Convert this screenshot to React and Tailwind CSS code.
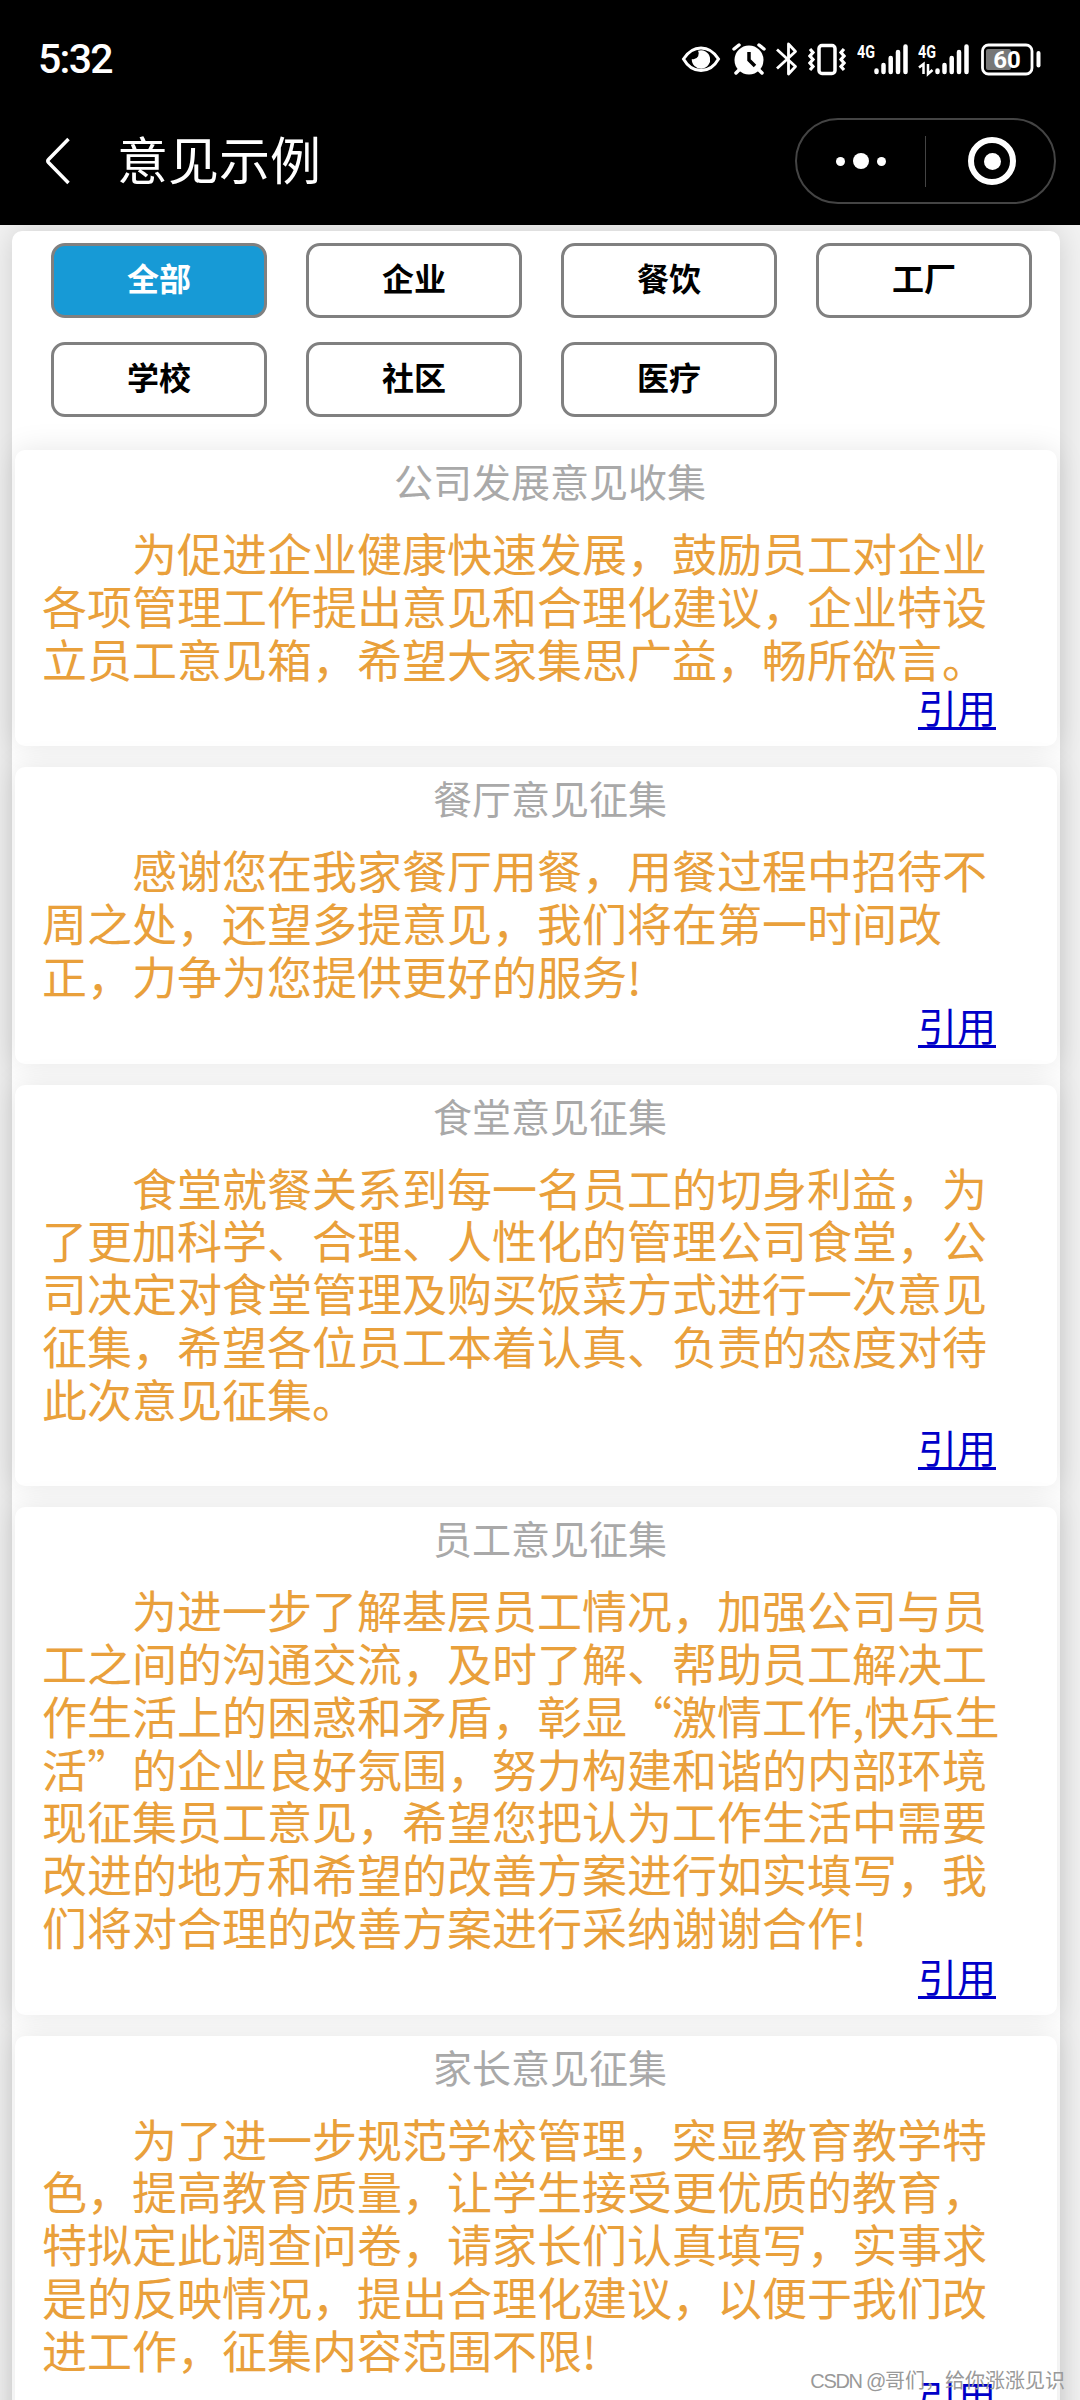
import React from "react";

const categories = ["全部", "企业", "餐饮", "工厂", "学校", "社区", "医疗"];

const examples = [
  {
    title: "公司发展意见收集",
    content:
      "为促进企业健康快速发展，鼓励员工对企业各项管理工作提出意见和合理化建议，企业特设立员工意见箱，希望大家集思广益，畅所欲言。",
  },
  {
    title: "餐厅意见征集",
    content:
      "感谢您在我家餐厅用餐，用餐过程中招待不周之处，还望多提意见，我们将在第一时间改正，力争为您提供更好的服务!",
  },
  {
    title: "食堂意见征集",
    content:
      "食堂就餐关系到每一名员工的切身利益，为了更加科学、合理、人性化的管理公司食堂，公司决定对食堂管理及购买饭菜方式进行一次意见征集，希望各位员工本着认真、负责的态度对待此次意见征集。",
  },
  {
    title: "员工意见征集",
    content:
      "为进一步了解基层员工情况，加强公司与员工之间的沟通交流，及时了解、帮助员工解决工作生活上的困惑和矛盾，彰显“激情工作,快乐生活”的企业良好氛围，努力构建和谐的内部环境现征集员工意见，希望您把认为工作生活中需要改进的地方和希望的改善方案进行如实填写，我们将对合理的改善方案进行采纳谢谢合作!",
  },
  {
    title: "家长意见征集",
    content:
      "为了进一步规范学校管理，突显教育教学特色，提高教育质量，让学生接受更优质的教育，特拟定此调查问卷，请家长们认真填写，实事求是的反映情况，提出合理化建议，以便于我们改进工作，征集内容范围不限!",
  },
];

const EyeIcon = () => (
  <svg width="40" height="36" viewBox="0 0 40 36" fill="none">
    <path d="M2.500 18C7 11 13 7 20 7s13 4 17.500 11C33 26 27 29.500 20 29.500S7 26 2.500 18Z" stroke="#fff" strokeWidth="3" />
    <path d="M17 9.800a5.500 5.500 0 0 1-4.500 8.400c-.6 0-1.200 0-1.700-.2a9.200 9.200 0 1 0 6.200-8.200Z" fill="#fff" />
  </svg>
);

const AlarmIcon = () => (
  <svg width="34" height="36" viewBox="0 0 34 36" fill="none">
    <circle cx="17" cy="19" r="14.500" fill="#fff" />
    <path d="m2 8 5-4M32 8l-5-4M7 29l-3 3M27 29l3 3" stroke="#fff" strokeWidth="3.500" strokeLinecap="round" />
    <path d="M17 11v8l6 6" stroke="#000" strokeWidth="3.500" />
  </svg>
);

const BluetoothIcon = () => (
  <svg width="22" height="36" viewBox="0 0 22 36" fill="none">
    <path d="m1 8.500 18.500 17-7 7.500V3l7 7.500L1 27.500" stroke="#fff" strokeWidth="2.800" strokeLinejoin="round" />
  </svg>
);

const VibrateIcon = () => (
  <svg width="38" height="36" viewBox="0 0 38 36" fill="none" stroke="#fff" strokeWidth="3.500">
    <rect x="11" y="4.500" width="16" height="28" rx="3" />
    <path d="m2 8 3 3.500-3 3.500 3 3.500-3 3.500 3 3.500-3 3.500M36 8l-3 3.500 3 3.500-3 3.500 3 3.500-3 3.500 3 3.500" strokeWidth="3.200" />
  </svg>
);

const SignalIcon = ({ transfer }) => (
  <svg width="51" height="36" viewBox="0 0 51 36" fill="none">
    <text x="0" y="17" fill="#fff" fontSize="18.500" fontWeight="700" fontFamily="Roboto, sans-serif" textLength="18" lengthAdjust="spacingAndGlyphs">
      4G
    </text>
    <path d="M19.500 29.500v1.500M26.500 24v7M33.700 17v14M41 11v20M48.500 5.500V31" stroke="#fff" strokeWidth="4.500" strokeLinecap="round" />
    {transfer && <path d="M1 26.500 5.500 23v10M10 23v10l4.500-4" stroke="#fff" strokeWidth="2.500" />}
  </svg>
);

const BatteryIcon = () => (
  <svg width="62" height="36" viewBox="0 0 62 36" fill="none">
    <rect x="1.500" y="4" width="49.500" height="29" rx="6" stroke="#fff" strokeWidth="2.800" />
    <rect x="5" y="8" width="25" height="21" rx="2" fill="#777" />
    <text x="26" y="26.500" fill="#fff" fontSize="24" fontWeight="700" fontFamily="Roboto, sans-serif" textAnchor="middle">
      60
    </text>
    <path d="M57.500 12v12.500" stroke="#fff" strokeWidth="4" strokeLinecap="round" />
  </svg>
);

const Header = () => (
  <header className="relative z-10 h-[225px] bg-black text-white">
    <div className="flex h-[118px] items-center justify-between pl-[38px] pr-[37px]">
      <span className="pt-[2px] font-[Roboto] text-[41px] font-medium tracking-[-1.7px]">5:32</span>
      <div className="flex items-center">
        <EyeIcon />
        <div className="ml-[11px]"><AlarmIcon /></div>
        <div className="ml-[10px]"><BluetoothIcon /></div>
        <div className="ml-[10px]"><VibrateIcon /></div>
        <div className="ml-[11px]"><SignalIcon /></div>
        <div className="ml-[10px]"><SignalIcon transfer /></div>
        <div className="ml-[12px]"><BatteryIcon /></div>
      </div>
    </div>

    <div className="flex h-[86px] items-center pl-[45px] pr-6">
      <svg width="26" height="48" viewBox="0 0 26 48" fill="none">
        <path d="M23.500 2 3.500 22.500q-1.500 1.500 0 3L23.500 46" stroke="#fff" strokeWidth="3.500" />
      </svg>
      <h1 className="ml-[46px] pb-[6px] text-[51px] leading-none">意见示例</h1>
      <div className="ml-auto flex h-[86px] w-[261px] items-center rounded-full border-2 border-[#444]">
        <div className="flex w-[128px] items-center justify-center gap-2">
          <span className="size-[9px] rounded-full bg-white" />
          <span className="size-4 rounded-full bg-white" />
          <span className="size-[9px] rounded-full bg-white" />
        </div>
        <span className="h-[51px] w-px bg-[#444]" />
        <div className="flex flex-1 items-center justify-center pl-1">
          <span className="flex size-12 items-center justify-center rounded-full border-[6px] border-white">
            <span className="size-[17px] rounded-full bg-white" />
          </span>
        </div>
      </div>
    </div>
  </header>
);

const ExampleCard = ({ title, content }) => (
  <article className="rounded-[10px] bg-white px-[27px] pb-[16px] pt-[7px] shadow-[0_0_30px_rgba(0,0,0,0.1)]">
    <h2 className="pl-7 text-center text-[39px] leading-[46px] text-[#a9a9a9]">{title}</h2>
    <p className="mt-[24px] w-[960px] indent-[90px] text-[45px] leading-[52.75px] text-[#e9a03b]">{content}</p>
    <div className="flex h-[45px] justify-end pr-[34px]">
      <a className="text-[39px] leading-[43px] text-[#0000c8] underline decoration-[3px] underline-offset-[4px]">引用</a>
    </div>
  </article>
);

const App = () => {
  return (
    <div className="relative h-[2400px] w-[1080px] overflow-hidden bg-[#f2f2f2] font-['Noto_Sans_CJK_SC',sans-serif]">
      <Header />

      <main className="ml-3 mt-[6px] h-[2300px] w-[1048px] rounded-[10px] bg-white pt-3 shadow-[0_0_30px_rgba(0,0,0,0.15)]">
        {/* Category filter */}
        <div className="grid grid-cols-[repeat(4,216px)] gap-x-[39px] gap-y-6 pl-[39px]">
          {categories.map((name, i) => (
            <button
              key={name}
              className={`h-[75px] rounded-[14px] border-[3px] border-[#808080] pb-2 text-[32px] font-bold leading-none ${
                i === 0 ? "bg-[#179ad6] text-white" : "bg-white text-black"
              }`}
            >
              {name}
            </button>
          ))}
        </div>

        {/* Example list */}
        <div className="mt-[33px] flex flex-col gap-[21px] pl-[3px] pr-[3px]">
          {examples.map((item) => (
            <ExampleCard key={item.title} {...item} />
          ))}
        </div>
      </main>

      <span className="absolute right-[15px] top-[2366px] font-['Liberation_Sans','Noto_Sans_CJK_SC',sans-serif] text-[20px] leading-[30px] text-[#999]">
        <span className="tracking-[-1.3px]">CSDN @</span>哥们，给你涨涨见识
      </span>
    </div>
  );
};

export default App;
